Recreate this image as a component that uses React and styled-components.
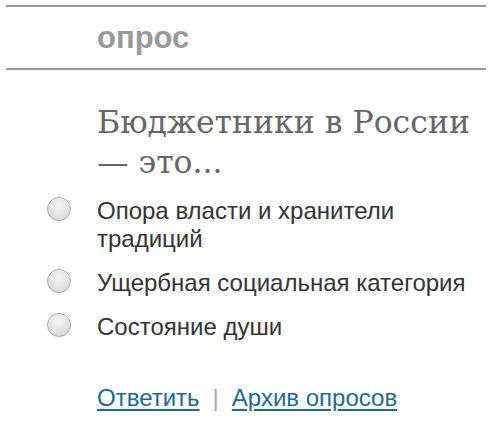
import React from "react";
import styled, { createGlobalStyle } from "styled-components";

const Global = createGlobalStyle`
  html, body { margin: 0; padding: 0; background: #fff; }
  body { font-family: "Liberation Sans", Arial, sans-serif; }
`;

const Widget = styled.div`
  width: 491px;
  padding: 5px 5px 0 6px;
  box-sizing: border-box;
`;

const Header = styled.div`
  border-top: 2px solid #999;
  border-bottom: 2px solid #999;
  height: 61px;
  display: flex;
  align-items: center;
  padding-left: 91px;
  font-family: "Liberation Sans", Arial, sans-serif;
  font-weight: bold;
  font-size: 31px;
  color: #999;
`;

const Body = styled.div`
  padding: 32px 0 0 91px;
`;

const Title = styled.h2`
  margin: 0;
  font-family: "DejaVu Serif", Georgia, serif;
  font-weight: normal;
  font-size: 31.5px;
  line-height: 40px;
  color: #666;
`;

const Options = styled.div`
  margin: 15px 0 0 -50px;
  display: flex;
  flex-direction: column;
  gap: 16px;
`;

const Option = styled.label`
  display: flex;
  align-items: flex-start;
  gap: 26px;
  font-family: "Liberation Sans", Arial, sans-serif;
  font-size: 24px;
  line-height: 28px;
  color: #333;
`;

const Radio = styled.span`
  flex: none;
  box-sizing: border-box;
  width: 24px;
  height: 24px;
  border-radius: 50%;
  border: 1px solid #a8a8a8;
  background: radial-gradient(circle at 50% 35%, #f4f4f4 0%, #dcdcdc 70%, #cfcfcf 100%);
  box-shadow: inset 0 1px 1px rgba(255, 255, 255, 0.8);
`;

const Links = styled.div`
  margin-top: 43px;
  display: flex;
  align-items: baseline;
  gap: 13px;
  font-family: "Liberation Sans", Arial, sans-serif;
  font-size: 24px;
`;

const Link = styled.a`
  color: #1d6a93;
  text-decoration: underline;
  text-underline-offset: 3px;
`;

const Sep = styled.span`
  color: #aaa;
`;

const options = [
  "Опора власти и хранители традиций",
  "Ущербная социальная категория",
  "Состояние души",
];

export default function App() {
  return (
    <>
      <Global />
      <Widget>
        <Header>опрос</Header>
        <Body>
          <Title>Бюджетники в России — это...</Title>
          <Options>
            {options.map((o) => (
              <Option key={o}>
                <Radio />
                <span>{o}</span>
              </Option>
            ))}
          </Options>
          <Links>
            <Link href="#">Ответить</Link>
            <Sep>|</Sep>
            <Link href="#">Архив опросов</Link>
          </Links>
        </Body>
      </Widget>
    </>
  );
}
